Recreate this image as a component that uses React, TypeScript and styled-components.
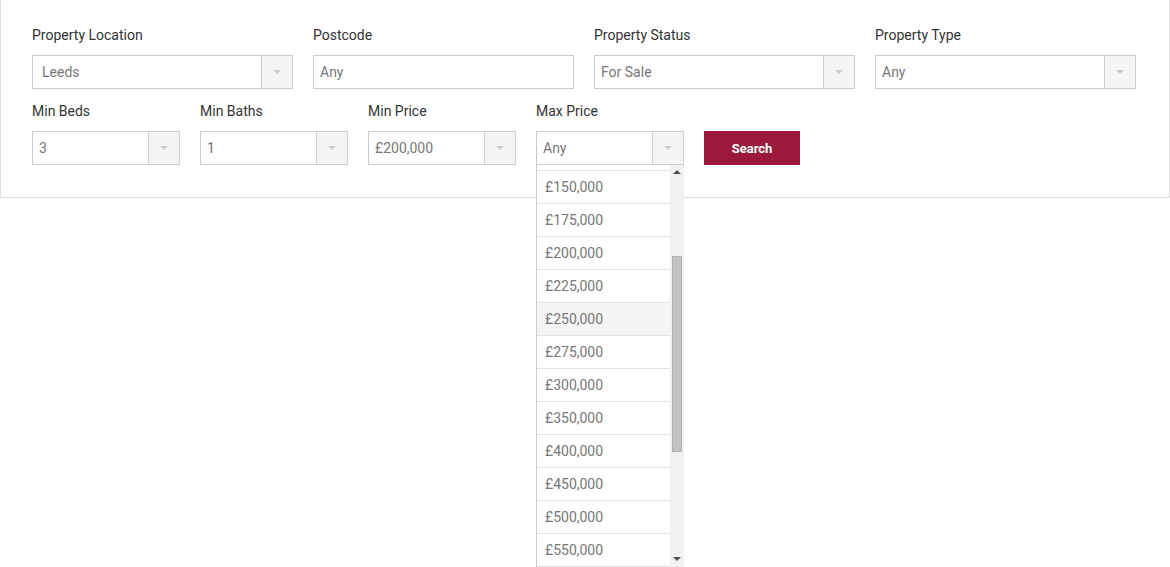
import React from "react";
import styled, { createGlobalStyle } from "styled-components";

const Global = createGlobalStyle`
  html, body { margin: 0; padding: 0; background: #fff; }
  body { font-family: Roboto, "Liberation Sans", Arial, sans-serif; min-height: 567px; }
  * { box-sizing: border-box; }
`;

const Panel = styled.div`
  width: 1170px;
  border: 1px solid #dddddd;
  border-top: none;
  padding: 25px 33px 32px 31px;
  background: #fff;
`;

const TopRow = styled.div`
  display: grid;
  grid-template-columns: repeat(4, 261px);
  column-gap: 20px;
`;

const BottomRow = styled.div`
  display: flex;
  align-items: flex-end;
  gap: 20px;
  margin-top: 12px;
`;

const Field = styled.div<{ $w?: number }>`
  position: relative;
  display: flex;
  flex-direction: column;
  width: ${(p) => (p.$w ? `${p.$w}px` : "auto")};
`;

const Label = styled.label`
  font-size: 14px;
  line-height: 20px;
  color: #333;
  margin-bottom: 10px;
`;

const Box = styled.div`
  display: flex;
  height: 34px;
  border: 1px solid #cccccc;
  background: #fff;
`;

const Value = styled.div<{ $pad?: number }>`
  flex: 1;
  display: flex;
  align-items: center;
  padding-left: ${(p) => p.$pad ?? 6}px;
  font-size: 14px;
  color: #777;
  white-space: nowrap;
  overflow: hidden;
`;

const ArrowBox = styled.div`
  width: 31px;
  border-left: 1px solid #cccccc;
  background: #f5f5f5;
  display: flex;
  align-items: center;
  justify-content: center;
`;

const Caret = styled.span<{ $c?: string; $up?: boolean }>`
  width: 0;
  height: 0;
  border-left: 4px solid transparent;
  border-right: 4px solid transparent;
  ${(p) =>
    p.$up
      ? `border-bottom: 4px solid ${p.$c ?? "#ccc"};`
      : `border-top: 4px solid ${p.$c ?? "#ccc"};`}
`;

const SearchButton = styled.button`
  width: 96px;
  height: 34px;
  border: none;
  background: #9b1a3a;
  color: #fff;
  font-family: Roboto, "Liberation Sans", Arial, sans-serif;
  font-weight: 700;
  font-size: 13px;
  cursor: pointer;
`;

const Dropdown = styled.div`
  position: absolute;
  top: 100%;
  left: 0;
  width: 148px;
  height: 402px;
  display: flex;
  border-left: 1px solid #cccccc;
  background: #fff;
  z-index: 5;
`;

const List = styled.ul`
  flex: 1;
  list-style: none;
  margin: 0;
  padding: 0;
  overflow: hidden;
`;

const Stub = styled.li`
  height: 6px;
  border-bottom: 1px solid #e3e3e3;
`;

const Item = styled.li<{ $hover?: boolean }>`
  height: 33px;
  border-bottom: 1px solid #e3e3e3;
  display: flex;
  align-items: center;
  padding-left: 8px;
  font-size: 14px;
  color: #777;
  background: ${(p) => (p.$hover ? "#f5f5f5" : "#fff")};
`;

const ScrollBar = styled.div`
  width: 14px;
  background: #f1f1f1;
  display: flex;
  flex-direction: column;
`;

const ScrollBtn = styled.div<{ $h: number }>`
  height: ${(p) => p.$h}px;
  display: flex;
  align-items: center;
  justify-content: center;
  padding-right: 1px;
`;

const Track = styled.div`
  flex: 1;
  padding: 0 2px;
`;

const Thumb = styled.div`
  margin-top: 77px;
  height: 196px;
  background: #c1c1c1;
  border: 1px solid #b0b0b0;
`;

type SelProps = { value: string; pad?: number };
const Select = ({ value, pad }: SelProps) => (
  <Box>
    <Value $pad={pad}>{value}</Value>
    <ArrowBox>
      <Caret />
    </ArrowBox>
  </Box>
);

const prices = [
  "£150,000",
  "£175,000",
  "£200,000",
  "£225,000",
  "£250,000",
  "£275,000",
  "£300,000",
  "£350,000",
  "£400,000",
  "£450,000",
  "£500,000",
  "£550,000",
];

export default function App() {
  return (
    <>
      <Global />
      <Panel>
        <TopRow>
          <Field>
            <Label>Property Location</Label>
            <Select value="Leeds" pad={9} />
          </Field>
          <Field>
            <Label>Postcode</Label>
            <Box>
              <Value>Any</Value>
            </Box>
          </Field>
          <Field>
            <Label>Property Status</Label>
            <Select value="For Sale" />
          </Field>
          <Field>
            <Label>Property Type</Label>
            <Select value="Any" />
          </Field>
        </TopRow>
        <BottomRow>
          <Field $w={148}>
            <Label>Min Beds</Label>
            <Select value="3" />
          </Field>
          <Field $w={148}>
            <Label>Min Baths</Label>
            <Select value="1" />
          </Field>
          <Field $w={148}>
            <Label>Min Price</Label>
            <Select value="£200,000" />
          </Field>
          <Field $w={148}>
            <Label>Max Price</Label>
            <Select value="Any" />
            <Dropdown>
              <List>
                <Stub />
                {prices.map((p) => (
                  <Item key={p} $hover={p === "£250,000"}>
                    {p}
                  </Item>
                ))}
              </List>
              <ScrollBar>
                <ScrollBtn $h={14}>
                  <Caret $up $c="#505050" />
                </ScrollBtn>
                <Track>
                  <Thumb />
                </Track>
                <ScrollBtn $h={17}>
                  <Caret $c="#505050" />
                </ScrollBtn>
              </ScrollBar>
            </Dropdown>
          </Field>
          <SearchButton>Search</SearchButton>
        </BottomRow>
      </Panel>
    </>
  );
}
